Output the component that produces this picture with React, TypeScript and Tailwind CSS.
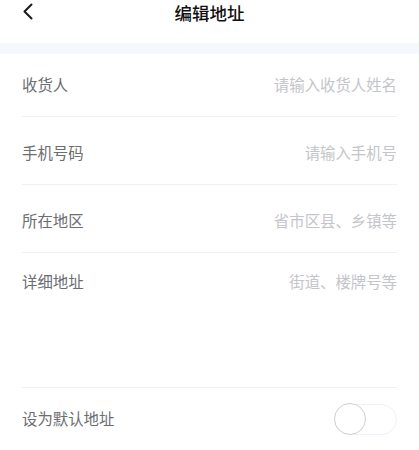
import React from "react";

const font = { fontFamily: '"Noto Sans CJK SC", "Noto Sans", sans-serif' };

function Row({ label, placeholder, className }: { label: string; placeholder: string; className: string }) {
  return (
    <div className={`flex items-center justify-between border-b border-[#f0f1f3] ${className}`}>
      <span className="text-[15.4px] leading-none text-[#6b6d71]">{label}</span>
      <span className="text-[15.4px] leading-none text-[#c3c5ca]">{placeholder}</span>
    </div>
  );
}

export default function App() {
  return (
    <div className="w-[419px] h-[450px] bg-white overflow-hidden" style={font}>
      <div className="relative flex h-[43px] items-start justify-center">
        <svg className="absolute left-[22px] top-[3px]" width="12" height="17" viewBox="0 0 12 17" fill="none">
          <path d="M9.5 1.5 L2.5 8.5 L9.5 15.5" stroke="#1a1a1a" strokeWidth="2" strokeLinecap="round" strokeLinejoin="round" />
        </svg>
        <span className="mt-[4px] text-[17.5px] leading-[18px] font-medium text-[#111]">编辑地址</span>
      </div>
      <div className="h-[11px] bg-[#f5f8fd]" />
      <div className="ml-[22px] w-[375px]">
        <Row label="收货人" placeholder="请输入收货人姓名" className="h-[63px]" />
        <Row label="手机号码" placeholder="请输入手机号" className="h-[68px] pt-[5px]" />
        <Row label="所在地区" placeholder="省市区县、乡镇等" className="h-[68px] pt-[5px]" />
        <div className="h-[135px] border-b border-[#f0f1f3] pt-[20px] flex justify-between">
          <span className="text-[15.4px] leading-[17px] text-[#6b6d71]">详细地址</span>
          <span className="text-[15.4px] leading-[17px] text-[#c3c5ca]">街道、楼牌号等</span>
        </div>
        <div className="flex h-[62px] items-center justify-between">
          <span className="text-[15.4px] leading-none text-[#6b6d71]">设为默认地址</span>
          <div className="relative flex h-[31px] w-[63px] items-center rounded-full border border-[#edf1fa] bg-white">
            <div className="absolute -left-[1px] h-[32px] w-[32px] rounded-full border border-[#cfcfcf] bg-white" />
          </div>
        </div>
      </div>
    </div>
  );
}
